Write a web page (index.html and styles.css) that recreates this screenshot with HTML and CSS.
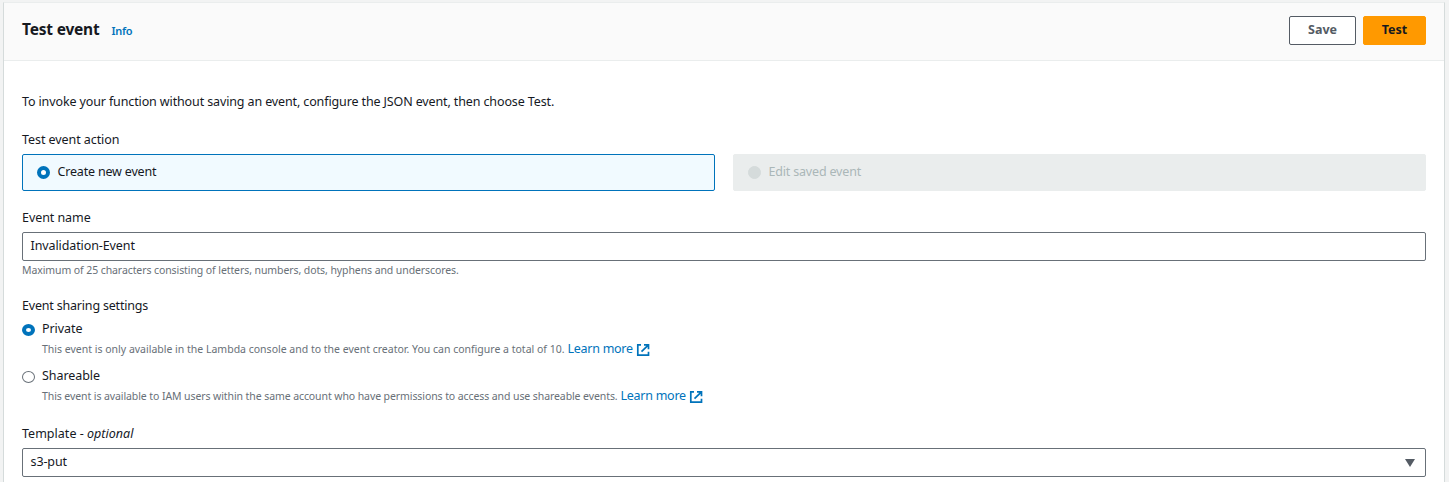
FILE: index.html
```html
<!DOCTYPE html>
<html lang="en">
<head>
<meta charset="utf-8">
<title>Test event</title>
<link rel="stylesheet" href="styles.css">
</head>
<body>
<main class="panel">
  <header class="panel-header">
    <h2 class="title">Test event</h2>
    <a class="info">Info</a>
    <div class="actions">
      <button class="btn btn-save">Save</button>
      <button class="btn btn-test">Test</button>
    </div>
  </header>
  <section class="content">
    <p class="line intro">To invoke your function without saving an event, configure the JSON event, then choose Test.</p>
    <div class="line label-action">Test event action</div>
    <div class="tiles">
      <label class="tile tile-on"><i class="radio on"></i><span>Create new event</span></label>
      <label class="tile tile-off"><i class="radio off"></i><span>Edit saved event</span></label>
    </div>
    <div class="line label-name">Event name</div>
    <div class="field"><span>Invalidation-Event</span></div>
    <div class="hint">Maximum of 25 characters consisting of letters, numbers, dots, hyphens and underscores.</div>
    <div class="line label-sharing">Event sharing settings</div>
    <div class="option">
      <i class="radio on"></i>
      <div class="option-text">
        <div class="line">Private</div>
        <div class="desc"><span class="desc-private">This event is only available in the Lambda console and to the event creator. You can configure a total of 10.</span><a class="learn">Learn more</a><svg class="ext" viewBox="0 0 14 14"><path d="M5 1.800H1.800v10.400h10.700V8.800M8 1.800h4.500v4.500M12.200 2.100L5.500 8.700"/></svg></div>
      </div>
    </div>
    <div class="option">
      <i class="radio"></i>
      <div class="option-text">
        <div class="line">Shareable</div>
        <div class="desc"><span class="desc-share">This event is available to IAM users within the same account who have permissions to access and use shareable events.</span><a class="learn">Learn more</a><svg class="ext" viewBox="0 0 14 14"><path d="M5 1.800H1.800v10.400h10.700V8.800M8 1.800h4.500v4.500M12.200 2.100L5.500 8.700"/></svg></div>
      </div>
    </div>
    <div class="line label-template">Template - <em>optional</em></div>
    <div class="field select"><span>s3-put</span><svg class="caret" viewBox="0 0 10 8"><path d="M0 0h10L5 8z"/></svg></div>
  </section>
</main>
</body>
</html>
```
FILE: styles.css
```css
* { box-sizing: border-box; }
body {
  margin: 0;
  height: 482px;
  overflow: hidden;
  padding: 2px 4px 0 3px;
  background: #f2f3f3;
  color: #16191f;
  font: 12.5px/20px "Noto Sans", sans-serif;
}
.panel {
  height: 500px;
  background: #fff;
  border: 1px solid #d5dbdb;
  border-top-color: #eaeded;
}
.panel-header {
  display: flex;
  height: 58px;
  padding: 0 18px;
  background: #fafafa;
  border-bottom: 1px solid #eaeded;
}
.title { margin: 15px 0 0; font-size: 15.5px; line-height: 22px; font-weight: 700; letter-spacing: -0.2px; white-space: nowrap; }
.info { margin: 18px 0 0 12px; font-size: 11px; line-height: 20px; font-weight: 600; letter-spacing: -0.3px; color: #0073bb; }
.actions { display: flex; gap: 7px; margin: 13px 0 0 auto; }
.btn {
  height: 29px;
  padding: 0 0 1px;
  border: 1px solid #545b64;
  border-radius: 2px;
  background: #fff;
  color: #545b64;
  font: 700 12.5px/20px "Noto Sans", sans-serif;
}
.btn-save { width: 67px; }
.btn-test { width: 63px; background: #ff9900; border-color: #ff9900; color: #16191f; }
.content { padding: 31px 18px 0; }
.line { margin: 0; height: 20px; white-space: nowrap; letter-spacing: -0.07px; }
.intro { letter-spacing: -0.125px; }
.label-action { margin-top: 18px; }
.tiles { display: grid; grid-template-columns: 1fr 1fr; gap: 18px; margin-top: 4px; letter-spacing: -0.18px; }
.tile { display: flex; height: 37px; padding: 7px 14px; border: 1px solid #0073bb; border-radius: 2px; background: #f1faff; }
.tile-off { background: #eaeded; border-color: #eaeded; color: #aab7b8; }
.radio { flex: none; width: 13px; height: 13px; border: 1px solid #687078; border-radius: 50%; background: #fff; }
.radio.on { border: 4px solid #0073bb; }
.radio.off { border-color: #d5dbdb; background: #d5dbdb; }
.tile .radio { margin: 4px 7.5px 0 0; }
.label-name { margin-top: 17px; }
.field { display: flex; height: 29px; margin-top: 4px; padding: 3px 7.5px; border: 1px solid #687078; border-radius: 2px; white-space: nowrap; letter-spacing: -0.1px; }
.hint { height: 19px; line-height: 18px; font-size: 10.5px; letter-spacing: -0.09px; color: #687078; white-space: nowrap; }
.label-sharing { margin-top: 16px; letter-spacing: -0.19px; }
.option { display: flex; height: 47px; padding-top: 3px; }
.option .radio { height: 12px; margin: 5px 7px 0 0; }
.desc { display: flex; height: 20px; font-size: 10.5px; color: #687078; white-space: nowrap; }
.desc-share { letter-spacing: -0.09px; }
.learn { margin-left: 3px; font-size: 12.5px; letter-spacing: -0.27px; color: #0073bb; }
.ext { width: 14px; height: 14px; margin: 4px 0 0 3px; fill: none; stroke: #0073bb; stroke-width: 1.7; }
.label-template { margin-top: 14px; letter-spacing: 0.02px; }
.select { justify-content: space-between; }
.caret { width: 10px; height: 8px; margin: 7px 2.5px 0 0; fill: #545b64; }
```
